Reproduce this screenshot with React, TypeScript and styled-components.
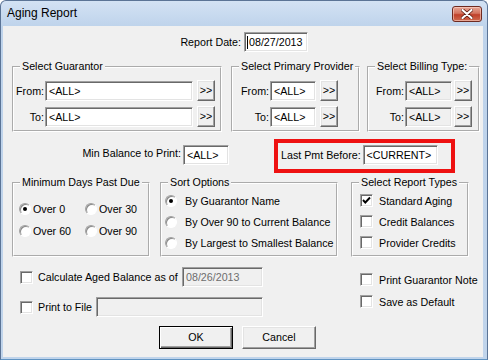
import React from "react";
import styled, { createGlobalStyle } from "styled-components";

const GlobalStyle = createGlobalStyle`
  html, body {
    margin: 0;
    padding: 0;
    background: #ffffff;
  }
  body {
    font-family: "Liberation Sans", Arial, sans-serif;
    font-size: 10.7px;
    color: #000;
  }
  * {
    box-sizing: border-box;
  }
`;

const Window = styled.div`
  width: 488px;
  height: 360px;
  display: flex;
  flex-direction: column;
  background: linear-gradient(#d3e2f4, #bed3eb 26px, #c0d4eb);
  border: 1px solid #5b7496;
  border-bottom-color: #5f93c2;
  border-radius: 6px 6px 0 0;
  padding: 0 4px 2px 2px;
`;

const TitleBar = styled.div`
  height: 25px;
  flex: none;
  display: flex;
  align-items: center;
  justify-content: space-between;
  padding-left: 4px;
`;

const TitleText = styled.span`
  font-size: 12px;
  color: #000;
  padding-bottom: 2px;
`;

const CloseButton = styled.div`
  width: 30px;
  height: 16px;
  margin-right: 1px;
  display: flex;
  align-items: center;
  justify-content: center;
  border: 1px solid #6e2a20;
  border-radius: 3px;
  background: linear-gradient(#e7a696, #d4735e 45%, #c0402a 55%, #cf6a4f);
  box-shadow: inset 0 0 0 1px rgba(255, 220, 210, 0.55);
`;

const Client = styled.div`
  flex: 1;
  background: #f0f0f0;
  display: flex;
  flex-direction: column;
`;

const Row = styled.div<{ $top: number; $left?: number; $align?: string }>`
  display: flex;
  align-items: ${(p) => p.$align || "center"};
  margin-top: ${(p) => p.$top}px;
  padding-left: ${(p) => p.$left || 0}px;
`;

const Label = styled.span<{ $w?: number }>`
  flex: none;
  width: ${(p) => (p.$w ? `${p.$w}px` : "auto")};
  text-align: ${(p) => (p.$w ? "right" : "left")};
  white-space: nowrap;
  padding-right: 1px;
`;

const TextBox = styled.div<{ $w: number; $h?: number; $disabled?: boolean; $gap?: number }>`
  flex: none;
  width: ${(p) => p.$w}px;
  height: ${(p) => p.$h || 20}px;
  margin-left: ${(p) => p.$gap ?? 1}px;
  display: flex;
  align-items: center;
  padding-left: 3px;
  white-space: nowrap;
  background: ${(p) => (p.$disabled ? "#f0f0f0" : "#ffffff")};
  border: 1px solid;
  border-color: #a0a0a0 #ffffff #ffffff #a0a0a0;
  box-shadow: inset 1px 1px 0 #696969, inset -1px -1px 0 #e3e3e3;
`;

const Faded = styled.span`
  color: #6d6d6d;
`;

const Caret = styled.span`
  width: 1px;
  height: 13px;
  background: #000;
  margin: 0 1px 0 -1px;
`;

const PushButton = styled.div<{ $w: number; $h: number; $gap?: number; $default?: boolean }>`
  flex: none;
  width: ${(p) => p.$w}px;
  height: ${(p) => p.$h}px;
  margin-left: ${(p) => p.$gap || 0}px;
  display: flex;
  align-items: center;
  justify-content: center;
  background: #f0f0f0;
  border: 1px solid;
  border-color: ${(p) => (p.$default ? "#000" : "#ffffff #696969 #696969 #ffffff")};
  box-shadow: ${(p) =>
    p.$default
      ? "inset 1px 1px 0 #ffffff, inset -1px -1px 0 #696969, inset -2px -2px 0 #a0a0a0"
      : "inset -1px -1px 0 #a0a0a0, inset 1px 1px 0 #e3e3e3"};
  padding-bottom: 1px;
`;

const Group = styled.fieldset<{ $w: number; $gap?: number }>`
  flex: none;
  width: ${(p) => p.$w}px;
  margin: 0 0 0 ${(p) => p.$gap || 0}px;
  padding: 0;
  min-width: 0;
  border: 2px groove #ffffff;
`;

const Legend = styled.legend`
  margin-left: 6px;
  padding: 0 2px;
  line-height: 13px;
  white-space: nowrap;
`;

const GroupBody = styled.div<{ $pad: string }>`
  display: flex;
  flex-direction: column;
  padding: ${(p) => p.$pad};
`;

const FieldRow = styled.div<{ $top?: number }>`
  display: flex;
  align-items: center;
  height: 21px;
  margin-top: ${(p) => p.$top || 0}px;
`;

const RadioGrid = styled.div`
  display: grid;
  grid-template-columns: 66px 60px;
  row-gap: 9px;
`;

const OptionRow = styled.div<{ $top?: number; $gap: number }>`
  display: flex;
  align-items: center;
  height: 13px;
  gap: ${(p) => p.$gap}px;
  margin-top: ${(p) => p.$top || 0}px;
  white-space: nowrap;
`;

const RadioCircle = styled.span`
  flex: none;
  width: 12px;
  height: 12px;
  border-radius: 50%;
  background: #ffffff;
  border: 1px solid;
  border-color: #a0a0a0 #ffffff #ffffff #a0a0a0;
  box-shadow: inset 1px 1px 0 #8a8a8a;
  display: flex;
  align-items: center;
  justify-content: center;
`;

const RadioDot = styled.span`
  width: 4px;
  height: 4px;
  border-radius: 50%;
  background: #000;
`;

const CheckBox = styled.span`
  flex: none;
  width: 13px;
  height: 13px;
  background: #ffffff;
  border: 1px solid;
  border-color: #a0a0a0 #ffffff #ffffff #a0a0a0;
  box-shadow: inset 1px 1px 0 #696969, inset -1px -1px 0 #e3e3e3;
  display: flex;
  align-items: center;
  justify-content: center;
`;

const Highlight = styled.div`
  width: 181px;
  height: 34px;
  margin-left: 45px;
  border: 4px solid #ee1111;
  display: flex;
  align-items: flex-start;
  padding: 2px 0 0 3px;
`;

const BottomArea = styled.div`
  display: flex;
  margin-top: 10px;
`;

const LeftColumn = styled.div`
  width: 260px;
  padding-left: 17px;
  display: flex;
  flex-direction: column;
  gap: 10px;
`;

const RightColumn = styled.div`
  margin-left: 97px;
  padding-top: 6px;
  display: flex;
  flex-direction: column;
`;

const LineRow = styled.div`
  display: flex;
  align-items: center;
  height: 20px;
`;

const Spacer = styled.span`
  flex: 1;
`;

const ButtonBar = styled.div`
  display: flex;
  margin-top: 9px;
  padding-left: 156px;
  gap: 9px;
`;

const Radio: React.FC<{ checked?: boolean; label: string; gap?: number; top?: number }> = ({
  checked,
  label,
  gap = 2,
  top,
}) => (
  <OptionRow $gap={gap} $top={top}>
    <RadioCircle>{checked && <RadioDot />}</RadioCircle>
    <span>{label}</span>
  </OptionRow>
);

const Check: React.FC<{ checked?: boolean; label: string; gap?: number; top?: number }> = ({
  checked,
  label,
  gap = 6,
  top,
}) => (
  <OptionRow $gap={gap} $top={top}>
    <CheckBox>
      {checked && (
        <svg width="9" height="9" viewBox="0 0 9 9">
          <polyline points="1,4 3.3,6.5 8,1.5" fill="none" stroke="#000" strokeWidth="1.9" />
        </svg>
      )}
    </CheckBox>
    <span>{label}</span>
  </OptionRow>
);

const Picker: React.FC<{
  label: string;
  labelWidth: number;
  boxWidth: number;
  btnGap: number;
  disabled?: boolean;
  top?: number;
}> = ({ label, labelWidth, boxWidth, btnGap, disabled, top }) => (
  <FieldRow $top={top}>
    <Label $w={labelWidth}>{label}</Label>
    <TextBox $w={boxWidth} $disabled={disabled} $gap={0}>
      &lt;ALL&gt;
    </TextBox>
    <PushButton $w={18} $h={21} $gap={btnGap}>
      &gt;&gt;
    </PushButton>
  </FieldRow>
);

const App: React.FC = () => {
  return (
    <>
      <GlobalStyle />
      <Window>
        <TitleBar>
          <TitleText>Aging Report</TitleText>
          <CloseButton>
            <svg width="12" height="10" viewBox="0 0 12 10">
              <path
                d="M1.5 1 L10.5 9 M10.5 1 L1.5 9"
                stroke="#5a1a10"
                strokeWidth="3.6"
                strokeLinecap="round"
              />
              <path
                d="M1.5 1 L10.5 9 M10.5 1 L1.5 9"
                stroke="#ffffff"
                strokeWidth="2.2"
                strokeLinecap="round"
              />
            </svg>
          </CloseButton>
        </TitleBar>
        <Client>
          <Row $top={6}>
            <Label $w={239}>Report Date:</Label>
            <TextBox $w={64} $gap={2}>
              <Caret />
              08/27/2013
            </TextBox>
          </Row>

          <Row $top={8} $left={9} $align="stretch">
            <Group $w={210}>
              <Legend>Select Guarantor</Legend>
              <GroupBody $pad="7px 0 3px 0">
                <Picker label="From:" labelWidth={31} boxWidth={148} btnGap={4} />
                <Picker label="To:" labelWidth={31} boxWidth={148} btnGap={4} top={5} />
              </GroupBody>
            </Group>
            <Group $w={129} $gap={9}>
              <Legend>Select Primary Provider</Legend>
              <GroupBody $pad="7px 0 3px 0">
                <Picker label="From:" labelWidth={37} boxWidth={46} btnGap={4} />
                <Picker label="To:" labelWidth={37} boxWidth={46} btnGap={4} top={5} />
              </GroupBody>
            </Group>
            <Group $w={113} $gap={7}>
              <Legend>Select Billing Type:</Legend>
              <GroupBody $pad="7px 0 3px 0">
                <Picker label="From:" labelWidth={36} boxWidth={47} btnGap={2} disabled />
                <Picker label="To:" labelWidth={36} boxWidth={47} btnGap={2} disabled top={5} />
              </GroupBody>
            </Group>
          </Row>

          <Row $top={7} $align="flex-start">
            <Label $w={179} style={{ marginTop: 8 }}>
              Min Balance to Print:
            </Label>
            <TextBox $w={46} $gap={1} style={{ marginTop: 6 }}>
              &lt;ALL&gt;
            </TextBox>
            <Highlight>
              <Label style={{ lineHeight: "20px" }}>Last Pmt Before:</Label>
              <TextBox $w={75} $gap={1}>
                &lt;CURRENT&gt;
              </TextBox>
            </Highlight>
          </Row>

          <Row $top={3} $left={9} $align="stretch">
            <Group $w={138}>
              <Legend>Minimum Days Past Due</Legend>
              <GroupBody $pad="13px 0 6px 5px">
                <RadioGrid>
                  <Radio checked label="Over 0" />
                  <Radio label="Over 30" />
                  <Radio label="Over 60" />
                  <Radio label="Over 90" />
                </RadioGrid>
              </GroupBody>
            </Group>
            <Group $w={178} $gap={10}>
              <Legend>Sort Options</Legend>
              <GroupBody $pad="5px 0 6px 3px">
                <Radio checked label="By Guarantor Name" gap={8} />
                <Radio label="By Over 90 to Current Balance" gap={8} top={8} />
                <Radio label="By Largest to Smallest Balance" gap={8} top={8} />
              </GroupBody>
            </Group>
            <Group $w={118} $gap={13}>
              <Legend>Select Report Types</Legend>
              <GroupBody $pad="5px 0 6px 7px">
                <Check checked label="Standard Aging" />
                <Check label="Credit Balances" top={8} />
                <Check label="Provider Credits" top={8} />
              </GroupBody>
            </Group>
          </Row>

          <BottomArea>
            <LeftColumn>
              <LineRow>
                <Check label="Calculate Aged Balance as of" gap={5} />
                <Spacer />
                <TextBox $w={81} $disabled>
                  <Faded>08/26/2013</Faded>
                </TextBox>
              </LineRow>
              <LineRow>
                <Check label="Print to File" gap={5} />
                <Spacer />
                <TextBox $w={167} $disabled />
              </LineRow>
            </LeftColumn>
            <RightColumn>
              <Check label="Print Guarantor Note" />
              <Check label="Save as Default" top={9} />
            </RightColumn>
          </BottomArea>

          <ButtonBar>
            <PushButton $w={74} $h={23} $default>
              OK
            </PushButton>
            <PushButton $w={74} $h={23}>
              Cancel
            </PushButton>
          </ButtonBar>
        </Client>
      </Window>
    </>
  );
};

export default App;
